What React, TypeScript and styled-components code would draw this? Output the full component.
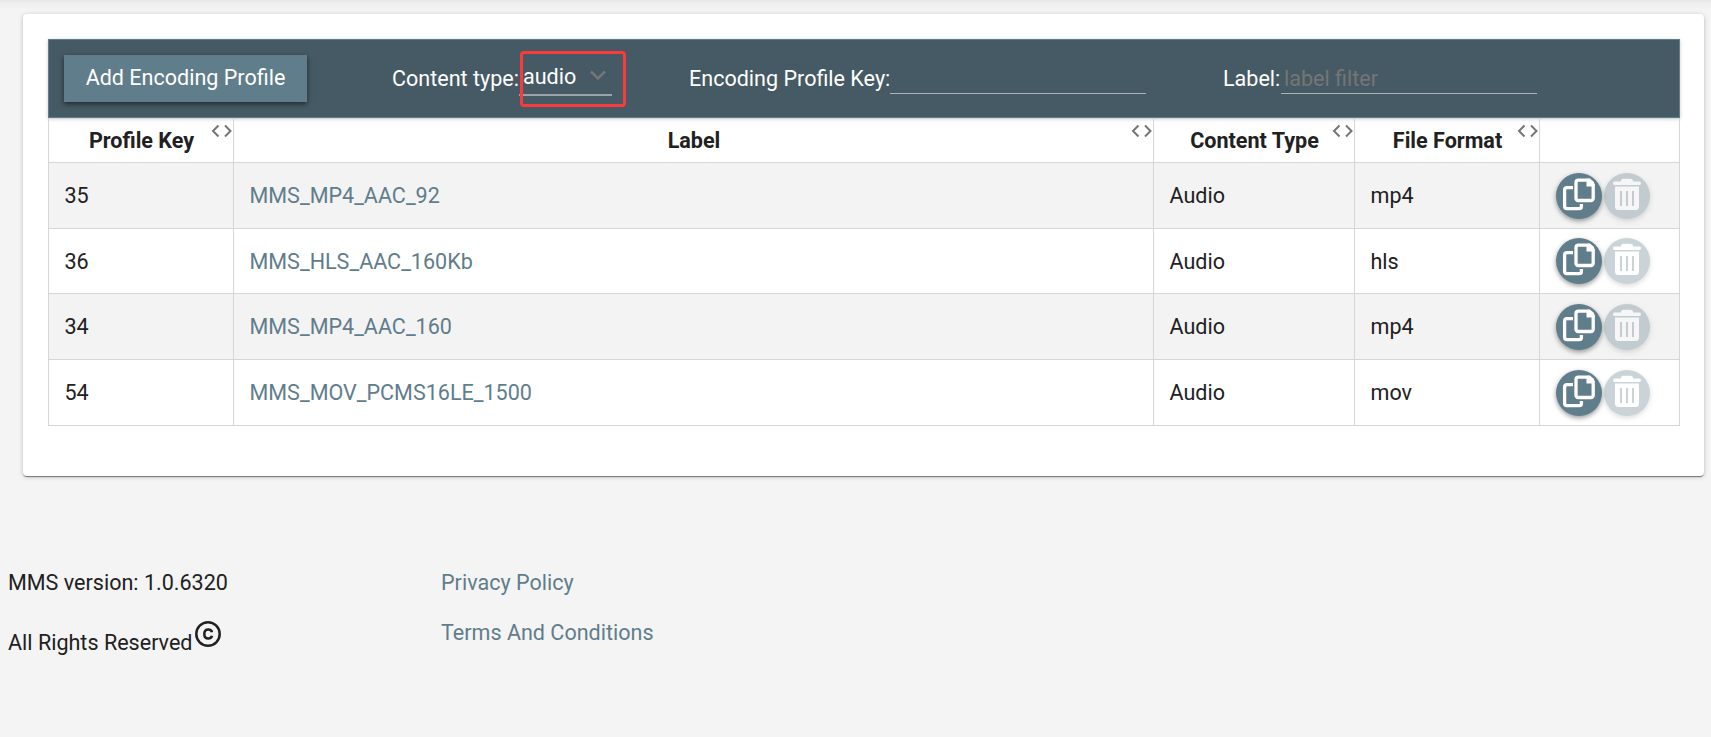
import React from "react";
import styled, { createGlobalStyle, css } from "styled-components";

const Global = createGlobalStyle`
  * { box-sizing: border-box; }
  body { margin: 0; background: #f4f4f4; }
`;

const Page = styled.div`
  height: 737px;
  overflow: hidden;
  padding: 14px 7px 0 23px;
  background: linear-gradient(#e6e6e6, #f0f0f0 4px, #f4f4f4 10px);
  color: #212121;
  font: 21.55px/30px Roboto, sans-serif;
`;

const Card = styled.main`
  height: 462px;
  padding: 25px 24px 0 25px;
  background: #fff;
  border-radius: 4px;
  box-shadow: 0 2px 1px -1px rgba(0, 0, 0, 0.3), 0 1px 1px rgba(0, 0, 0, 0.22),
    0 1px 5px rgba(0, 0, 0, 0.2);
`;

const Toolbar = styled.header`
  display: flex;
  align-items: flex-start;
  width: 1632px;
  height: 79px;
  padding: 15px 15px 0;
  background: #455a64;
  border: 1px solid #607d8b;
  box-shadow: 0 1px 4px rgba(0, 0, 0, 0.2);
  color: #fff;
`;

const AddButton = styled.button`
  width: 243px;
  height: 47px;
  padding: 0 0 1px;
  border: 0;
  background: #607d8b;
  box-shadow: 0 2px 5px rgba(0, 0, 0, 0.55);
  color: #fff;
  font: inherit;
`;

const Field = styled.label<{ $gap: number }>`
  display: flex;
  margin-left: ${(p) => p.$gap}px;
  padding-top: 8px;
  white-space: nowrap;
`;

const FieldName = styled.span<{ $w: number }>`
  width: ${(p) => p.$w}px;
  padding-top: 1px;
`;

const TextInput = styled.input`
  width: 256px;
  height: 31px;
  padding: 0 3px;
  border: 0;
  border-bottom: 1px solid #a9b3b8;
  outline: 0;
  background: none;
  color: #fff;
  font: inherit;
  &::placeholder { color: #757575; opacity: 1; }
`;

const Select = styled.span`
  position: relative;
  display: flex;
  justify-content: space-between;
  width: 93px;
  height: 33px;
  padding: 0 6px 0 4px;
  border-bottom: 2px solid #9ba3a7;
  line-height: 28px;
  svg { margin-top: 7px; }
`;

const Highlight = styled.span`
  position: absolute;
  left: 1px;
  top: -12px;
  width: 106px;
  height: 56px;
  border: 3px solid #fc3a3a;
  border-radius: 4px;
`;

const rowGrid = css`
  display: grid;
  grid-template-columns: 185px 920px 201px 185px 140px;
`;

const Table = styled.section`
  width: 1632px;
  border: solid #d6d6d6;
  border-width: 0 1px;
`;

const HeadRow = styled.div`
  ${rowGrid}
  height: 45px;
  border: solid #d6d6d6;
  border-width: 1px 0;
  font-weight: 700;
`;

const HeadCell = styled.div`
  display: flex;
  justify-content: flex-end;
  border-right: 1px solid #d6d6d6;
  &:last-child { border-right: 0; }
`;

const HeadText = styled.span`
  flex: 1;
  padding: 7px 0 0 23px;
  text-align: center;
`;

const SortIcon = styled.svg`
  margin: 5px 1px 0 0;
`;

const Row = styled.div<{ $h: number; $shade: boolean }>`
  ${rowGrid}
  height: ${(p) => p.$h}px;
  background: ${(p) => (p.$shade ? "#f3f3f3" : "#fff")};
  border-bottom: 1px solid #d6d6d6;
`;

const Cell = styled.div<{ $link?: boolean }>`
  display: flex;
  align-items: center;
  padding-left: 15.5px;
  padding-top: 1px;
  border-right: 1px solid #d6d6d6;
  color: ${(p) => (p.$link ? "#607d8b" : "inherit")};
`;

const Actions = styled.div`
  display: flex;
  align-items: center;
  gap: 2px;
  padding-left: 16px;
`;

const RoundButton = styled.button<{ $disabled?: boolean }>`
  width: 46px;
  height: 46px;
  padding: 0;
  border: 0;
  border-radius: 50%;
  background: #607d8b;
  box-shadow: 0 2px 5px rgba(0, 0, 0, 0.4);
  opacity: ${(p) => (p.$disabled ? 0.33 : 1)};
  svg { display: block; }
`;

const Footer = styled.footer`
  display: grid;
  grid-template-columns: 433px 1fr;
  margin: 92px 0 0 -15px;
`;

const FooterColumn = styled.div<{ $gap: number }>`
  display: flex;
  flex-direction: column;
  gap: ${(p) => p.$gap}px;
`;

const Line = styled.div`
  display: flex;
`;

const FooterLink = styled.a`
  color: #607d8b;
`;

const Copyright = styled.svg`
  margin: -8px 0 0 1px;
`;

const Sort = () => (
  <SortIcon width="21" height="14" viewBox="0 0 21 14" fill="none" stroke="#757575" strokeWidth="2">
    <path d="M7.500 1.500 2 7l5.500 5.500M14 1.500 19.500 7l-5.500 5.500" />
  </SortIcon>
);

const CopyIcon = () => (
  <svg width="46" height="46" viewBox="0 0 46 46" fill="none" stroke="#fff" strokeWidth="3.300">
    <path d="M17 14.700H11Q8.600 14.700 8.600 17V33Q8.600 35.700 11 35.700H23Q25.400 35.700 25.400 33.500V31" />
    <path d="M22.500 7.200H32.500L37.200 12V25Q37.200 27.500 34.700 27.500H22.500Q20 27.500 20 25V9.700Q20 7.200 22.500 7.200Z" />
    <path d="M30.500 6V13.500H38.500L38 9 34 5.600Z" fill="#fff" stroke="none" />
  </svg>
);

const TrashIcon = () => (
  <svg width="46" height="46" viewBox="0 0 46 46" fill="#fff">
    <path d="M17 8.500V7.500Q17.500 5.700 19.500 5.700H26.500Q28.500 5.700 29 7.500V8.500H35.500Q37 8.500 37 10.200T35.500 12H10.500Q9 12 9 10.200T10.500 8.500Z" />
    <path
      fillRule="evenodd"
      d="M11 13.500H35V33.500Q35 37 31.500 37H14.500Q11 37 11 33.500ZM16 18V33H18V18ZM22 18V33H24V18ZM28 18V33H30V18Z"
    />
  </svg>
);

const rows = [
  { key: "35", label: "MMS_MP4_AAC_92", format: "mp4", height: 66 },
  { key: "36", label: "MMS_HLS_AAC_160Kb", format: "hls", height: 65 },
  { key: "34", label: "MMS_MP4_AAC_160", format: "mp4", height: 66 },
  { key: "54", label: "MMS_MOV_PCMS16LE_1500", format: "mov", height: 66 },
];

const columns = ["Profile Key", "Label", "Content Type", "File Format"];

export default function App() {
  return (
    <Page>
      <Global />
      <Card>
        <Toolbar>
          <AddButton>Add Encoding Profile</AddButton>
          <Field $gap={85}>
            <FieldName $w={127}>Content type:</FieldName>
            <Select>
              audio
              <svg width="16" height="11" viewBox="0 0 16 11" fill="none" stroke="#757575" strokeWidth="2.500">
                <path d="M1 1.500 8 8.500l7-7" />
              </svg>
              <Highlight />
            </Select>
          </Field>
          <Field $gap={77}>
            <FieldName $w={201}>Encoding Profile Key:</FieldName>
            <TextInput />
          </Field>
          <Field $gap={77}>
            <FieldName $w={58}>Label:</FieldName>
            <TextInput placeholder="label filter" />
          </Field>
        </Toolbar>
        <Table>
          <HeadRow>
            {columns.map((name) => (
              <HeadCell key={name}>
                <HeadText>{name}</HeadText>
                <Sort />
              </HeadCell>
            ))}
            <HeadCell />
          </HeadRow>
          {rows.map((row, i) => (
            <Row key={row.key} $h={row.height} $shade={i % 2 === 0}>
              <Cell>{row.key}</Cell>
              <Cell $link>{row.label}</Cell>
              <Cell>Audio</Cell>
              <Cell>{row.format}</Cell>
              <Actions>
                <RoundButton aria-label="Copy">
                  <CopyIcon />
                </RoundButton>
                <RoundButton aria-label="Delete" $disabled>
                  <TrashIcon />
                </RoundButton>
              </Actions>
            </Row>
          ))}
        </Table>
      </Card>
      <Footer>
        <FooterColumn $gap={30}>
          <Line>MMS version: 1.0.6320</Line>
          <Line>
            All Rights Reserved
            <Copyright width="28" height="28" viewBox="0 0 28 28" fill="none" stroke="#212121" strokeWidth="2.500">
              <circle cx="14" cy="14" r="11.700" />
              <path d="M18 12.300C17.600 10.500 16.200 9.500 14.300 9.500 11.900 9.500 10.300 11.200 10.300 14S11.900 18.500 14.300 18.500C16.200 18.500 17.600 17.500 18 15.700" />
            </Copyright>
          </Line>
        </FooterColumn>
        <FooterColumn $gap={20}>
          <FooterLink>Privacy Policy</FooterLink>
          <FooterLink>Terms And Conditions</FooterLink>
        </FooterColumn>
      </Footer>
    </Page>
  );
}
